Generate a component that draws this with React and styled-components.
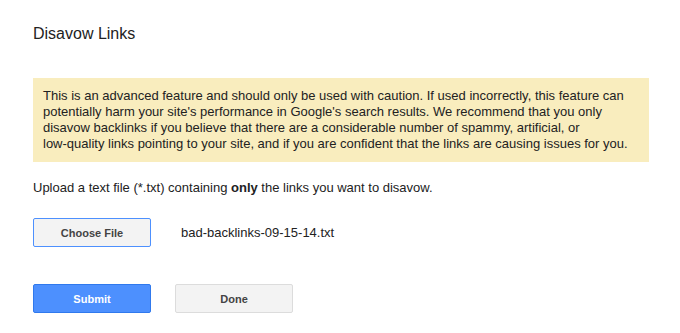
import styled, { createGlobalStyle } from "styled-components";

const GlobalStyle = createGlobalStyle`
  body {
    margin: 0;
    background: #fff;
    font-family: Arial, "Liberation Sans", sans-serif;
    color: #222;
  }
`;

const Page = styled.div`
  width: 616px;
  padding: 24px 0 0 33px;
  display: flex;
  flex-direction: column;
`;

const Title = styled.h1`
  margin: 0;
  font-size: 16px;
  font-weight: normal;
  line-height: 19px;
  color: #222;
`;

const Warning = styled.div`
  margin-top: 35px;
  background: #f9edbe;
  padding: 10px 10px 10px 10px;
  font-size: 13px;
  line-height: 16px;
  color: #222;
`;

const Instructions = styled.p`
  margin: 18px 0 0;
  font-size: 13px;
  line-height: 16px;
  color: #222;
`;

const FileRow = styled.div`
  display: flex;
  align-items: center;
  gap: 30px;
  margin-top: 22px;
`;

const FileName = styled.span`
  font-size: 13px;
  color: #222;
`;

const Button = styled.button`
  box-sizing: border-box;
  width: 118px;
  height: 29px;
  border-radius: 2px;
  font-family: Arial, "Liberation Sans", sans-serif;
  font-size: 11px;
  font-weight: bold;
  padding: 0;
  cursor: pointer;
  border: 1px solid
    ${(p) =>
      p.$variant === "primary"
        ? "#3079ed"
        : p.$variant === "focus"
        ? "#4d90fe"
        : "#dcdcdc"};
  background: ${(p) => (p.$variant === "primary" ? "#4d90fe" : "#f3f3f3")};
  color: ${(p) => (p.$variant === "primary" ? "#fff" : "#444")};
`;

const Actions = styled.div`
  display: flex;
  gap: 24px;
  margin-top: 37px;
`;

export default function App() {
  return (
    <>
      <GlobalStyle />
      <Page>
        <Title>Disavow Links</Title>
        <Warning>
          This is an advanced feature and should only be used with caution. If used incorrectly, this feature can
          <br />
          potentially harm your site's performance in Google's search results. We recommend that you only
          <br />
          disavow backlinks if you believe that there are a considerable number of spammy, artificial, or
          <br />
          low-quality links pointing to your site, and if you are confident that the links are causing issues for you.
        </Warning>
        <Instructions>
          Upload a text file (*.txt) containing <b>only</b> the links you want to disavow.
        </Instructions>
        <FileRow>
          <Button $variant="focus">Choose File</Button>
          <FileName>bad-backlinks-09-15-14.txt</FileName>
        </FileRow>
        <Actions>
          <Button $variant="primary">Submit</Button>
          <Button>Done</Button>
        </Actions>
      </Page>
    </>
  );
}
